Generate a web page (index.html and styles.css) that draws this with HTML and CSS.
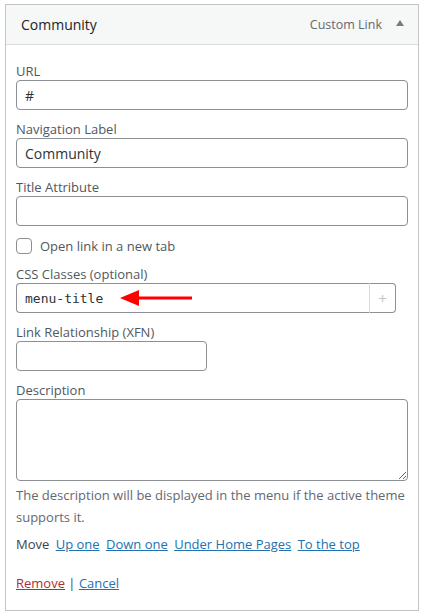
FILE: index.html
```html
<!DOCTYPE html>
<html lang="en">
<head>
    <meta charset="UTF-8">
    <title>Menu Item - Community</title>
    <link rel="stylesheet" href="styles.css">
</head>
<body>

<div class="menu-item">
    <div class="item-bar">
        <span class="item-title">Community</span>
        <span class="item-controls">
            <span class="item-type">Custom Link</span>
            <span class="item-toggle"></span>
        </span>
    </div>

    <div class="item-settings">
        <div class="field">
            <label for="url">URL</label>
            <input type="text" id="url" class="text-input" value="#">
        </div>

        <div class="field">
            <label for="nav-label">Navigation Label</label>
            <input type="text" id="nav-label" class="text-input" value="Community">
        </div>

        <div class="field">
            <label for="title-attr">Title Attribute</label>
            <input type="text" id="title-attr" class="text-input">
        </div>

        <div class="field check-row">
            <input type="checkbox" id="new-tab" class="check">
            <label for="new-tab">Open link in a new tab</label>
        </div>

        <div class="field">
            <label for="css-classes">CSS Classes (optional)</label>
            <div class="class-box">
                <input type="text" id="css-classes" class="class-input" value="menu-title">
                <span class="class-add">+</span>
                <svg class="arrow" width="80" height="20" viewBox="0 0 80 20">
                    <line x1="14" y1="10" x2="72" y2="10" stroke="#f00" stroke-width="3"/>
                    <polygon points="0,10 19,2 19,18" fill="#f00"/>
                </svg>
            </div>
        </div>

        <div class="field">
            <label for="xfn">Link Relationship (XFN)</label>
            <input type="text" id="xfn" class="text-input short">
        </div>

        <div class="field">
            <label for="desc">Description</label>
            <textarea id="desc" class="text-area"></textarea>
            <p class="help">The description will be displayed in the menu if the active theme supports it.</p>
        </div>

        <p class="move">
            Move
            <a href="#">Up one</a>
            <a href="#">Down one</a>
            <a href="#">Under Home Pages</a>
            <a href="#">To the top</a>
        </p>

        <p class="actions">
            <a href="#" class="remove">Remove</a> | <a href="#">Cancel</a>
        </p>
    </div>
</div>

</body>
</html>
```

FILE: styles.css
```css
body {
    font-family: 'Open Sans', 'Noto Sans', sans-serif;
    font-size: 13px;
    color: #3c434a;
    background-color: #fff;
    margin: 0;
    padding: 4px 5px 0 5px;
}
.menu-item {
    border: 1px solid #c3c4c7;
    background-color: #fff;
}
.item-bar {
    display: flex;
    justify-content: space-between;
    align-items: center;
    height: 39px;
    padding: 0 14px 0 15px;
    background-color: #f6f7f7;
    border-bottom: 1px solid #dcdcde;
}
.item-title {
    font-size: 14px;
    font-weight: 500;
    color: #1d2327;
}
.item-controls {
    display: flex;
    align-items: center;
    gap: 14px;
}
.item-type {
    font-size: 12.5px;
    color: #646970;
}
.item-toggle {
    width: 0;
    height: 0;
    border-left: 4px solid transparent;
    border-right: 4px solid transparent;
    border-bottom: 6px solid #787c82;
    margin-top: -3px;
}
.item-settings {
    padding: 7px 10px 10px 10px;
}
.field {
    margin-top: 10px;
}
.field label {
    display: block;
    line-height: 18px;
    color: #50575e;
}
.text-input, .class-input, .text-area {
    display: block;
    box-sizing: border-box;
    width: 100%;
    height: 30px;
    margin: 0;
    padding: 0 8px;
    border: 1px solid #8c8f94;
    border-radius: 4px;
    font-family: 'Open Sans', 'Noto Sans', sans-serif;
    font-size: 14px;
    color: #2c3338;
    background-color: #fff;
}
.text-input.short {
    width: 191px;
}
.text-area {
    height: 82px;
    padding: 4px 8px;
    resize: vertical;
}
.check-row {
    display: flex;
    align-items: center;
    gap: 8px;
    height: 18px;
    margin-top: 11px;
}
.check-row label {
    display: inline;
}
.check {
    appearance: none;
    width: 16px;
    height: 16px;
    margin: 0;
    border: 1px solid #8c8f94;
    border-radius: 4px;
    background-color: #fff;
}
.class-box {
    position: relative;
    display: flex;
    width: 380px;
    height: 30px;
    margin-bottom: 2px;
}
.class-input {
    flex: 1;
    height: 30px;
    border-radius: 4px 0 0 4px;
    border-right: none;
    font-family: 'DejaVu Sans Mono', 'Liberation Mono', monospace;
    font-size: 13px;
}
.class-add {
    display: flex;
    align-items: center;
    justify-content: center;
    box-sizing: border-box;
    width: 27px;
    height: 30px;
    border: 1px solid #8c8f94;
    border-left: 1px solid #dcdcde;
    border-radius: 0 4px 4px 0;
    color: #c3c4c7;
    font-size: 15px;
}
.arrow {
    position: absolute;
    left: 104px;
    top: 5px;
}
.help {
    margin: 3px 0 0 0;
    line-height: 22px;
    color: #646970;
}
.move {
    margin: 5px 0 0 0;
    line-height: 22px;
}
.move a {
    margin-left: 3px;
}
a {
    color: #2271b1;
}
.actions {
    margin: 17px 0 6px 0;
    line-height: 22px;
}
.remove {
    color: #b32d2e;
}
```
